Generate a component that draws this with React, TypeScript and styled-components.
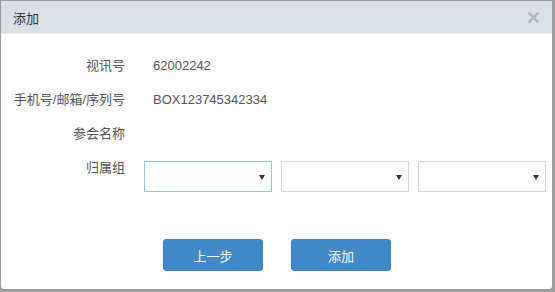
import React from 'react';
import { styled, createGlobalStyle } from 'styled-components';

const GlobalStyle = createGlobalStyle`
  html, body {
    margin: 0;
    padding: 0;
    background-color: #9c9c9c;
    font-family: "Liberation Sans", "Noto Sans CJK SC", sans-serif;
    font-size: 13px;
  }
`;

const Dialog = styled.div`
  margin: 1px 0 0 1px;
  width: 551px;
  height: 288px;
  background-color: #fff;
  border-radius: 0 0 3px 3px;
  display: flex;
  flex-direction: column;
  overflow: hidden;
`;

const Header = styled.div`
  height: 32px;
  display: flex;
  align-items: center;
  justify-content: space-between;
  padding: 0 13px 0 12px;
  background-color: #dae0e6;
  border-bottom: 1px solid #e6eaee;
  color: #333;
`;

const Title = styled.span`
  font-size: 13px;
`;

const CloseButton = styled.button`
  border: none;
  background: transparent;
  padding: 0;
  display: flex;
  cursor: pointer;
`;

const Form = styled.div`
  display: grid;
  grid-template-columns: 124px 1fr;
  column-gap: 19px;
  padding-top: 15px;
`;

const Label = styled.div<{ $top?: boolean }>`
  height: ${(p) => (p.$top ? 'auto' : '34px')};
  line-height: ${(p) => (p.$top ? '20px' : '34px')};
  padding-top: ${(p) => (p.$top ? '7px' : '0')};
  text-align: right;
  color: #555;
  white-space: nowrap;
`;

const Value = styled.div`
  height: 34px;
  line-height: 34px;
  padding-left: 9px;
  color: #555;
`;

const SelectRow = styled.div`
  display: flex;
  gap: 9px;
  padding-top: 10px;
`;

const Select = styled.div<{ $focus?: boolean }>`
  width: 128px;
  height: 31px;
  box-sizing: border-box;
  border: 1px solid ${(p) => (p.$focus ? '#8ec3ee' : '#d6d6d6')};
  background-color: #fff;
  display: flex;
  align-items: center;
  justify-content: flex-end;
  padding-right: 6px;
`;

const Caret = styled.span`
  width: 0;
  height: 0;
  border-left: 3px solid transparent;
  border-right: 3px solid transparent;
  border-top: 5px solid #333;
  margin-top: 2px;
`;

const Footer = styled.div`
  display: flex;
  justify-content: center;
  gap: 28px;
  margin-top: 47px;
  padding-left: 1px;
`;

const Button = styled.button`
  width: 100px;
  height: 32px;
  border: 1px solid #3a80bd;
  border-radius: 3px;
  background-color: #4189c9;
  color: #fff;
  font-family: inherit;
  font-size: 13px;
  cursor: pointer;
`;

export default function App() {
  return (
    <>
      <GlobalStyle />
      <Dialog>
        <Header>
          <Title>添加</Title>
          <CloseButton aria-label="close">
            <svg width="11" height="11" viewBox="0 0 11 11">
              <path d="M1.5 1.5 L9.5 9.5 M9.5 1.5 L1.5 9.5" stroke="#b3b8bc" strokeWidth="2.6" strokeLinecap="round" />
            </svg>
          </CloseButton>
        </Header>
        <Form>
          <Label>视讯号</Label>
          <Value>62002242</Value>
          <Label>手机号/邮箱/序列号</Label>
          <Value>BOX123745342334</Value>
          <Label>参会名称</Label>
          <Value />
          <Label $top>归属组</Label>
          <SelectRow>
            <Select $focus>
              <Caret />
            </Select>
            <Select>
              <Caret />
            </Select>
            <Select>
              <Caret />
            </Select>
          </SelectRow>
        </Form>
        <Footer>
          <Button>上一步</Button>
          <Button>添加</Button>
        </Footer>
      </Dialog>
    </>
  );
}
